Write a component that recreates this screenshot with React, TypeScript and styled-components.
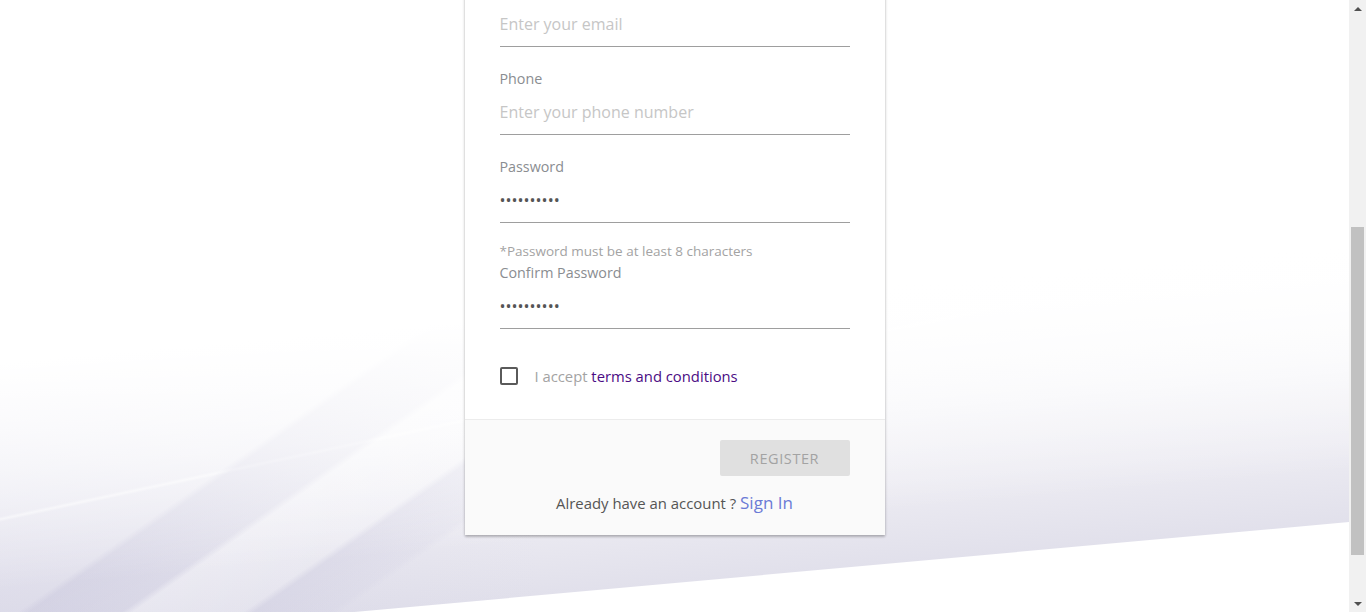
import React, { useEffect, useLayoutEffect } from 'react';
import styled, { createGlobalStyle } from 'styled-components';

const SCROLL_TOP = 391;

const GlobalStyle = createGlobalStyle`
  html, body {
    margin: 0;
    padding: 0;
  }
  body {
    font-family: 'Open Sans', 'Liberation Sans', sans-serif;
    background: #fff;
    padding-right: 17px;
  }
  * {
    box-sizing: border-box;
  }
`;

const Page = styled.div`
  position: relative;
  height: 1078px;
  display: flex;
  justify-content: center;
  align-items: flex-start;
  padding-top: 100px;

  &::before {
    content: '';
    position: absolute;
    inset: 0;
    z-index: 0;
    clip-path: polygon(0 0, 100% 0, 100% 913px, 0 1035px);
    background:
      linear-gradient(175deg, #fff 0, #fff 63%, rgba(255, 255, 255, 0.6) 72%, rgba(255, 255, 255, 0) 82%),
      linear-gradient(145deg,
        transparent 50.2%,
        rgba(190, 188, 214, 0.3) 50.6%,
        rgba(190, 188, 214, 0.18) 53.8%,
        rgba(255, 255, 255, 0.3) 54.2%,
        rgba(255, 255, 255, 0.2) 58%,
        rgba(195, 193, 218, 0.25) 58.4%,
        rgba(195, 193, 218, 0.12) 61%,
        transparent 61.4%
      ),
      linear-gradient(168deg, transparent 66.5%, rgba(255, 255, 255, 0.5) 66.7%, transparent 66.9%),
      linear-gradient(to right, rgba(200, 198, 222, 0.3), rgba(200, 198, 222, 0) 40%),
      linear-gradient(
        175deg,
        #ffffff 0,
        #ffffff 62%,
        #f6f6f9 72%,
        #ecebf2 80%,
        #e1e0eb 86.5%
      );
  }
`;

const Card = styled.div`
  position: relative;
  z-index: 1;
  width: 420px;
  background: #fff;
  box-shadow: 0 1px 3px rgba(0, 0, 0, 0.22), 0 2px 2px rgba(0, 0, 0, 0.12);
`;

const CardHeader = styled.div`
  padding: 40px 35px 0;
  height: 150px;
`;

const Title = styled.h2`
  margin: 0;
  font-size: 26px;
  font-weight: 500;
  color: #4b0c84;
`;

const Subtitle = styled.p`
  margin: 8px 0 0;
  font-size: 14px;
  color: #8a8d91;
`;

const CardBody = styled.div`
  padding: 34px 35px 33px;
  display: flex;
  flex-direction: column;
`;

const Field = styled.div`
  display: flex;
  flex-direction: column;
  margin-bottom: 22px;
`;

const Label = styled.label`
  font-size: 14.3px;
  line-height: 20px;
  color: #8a8d91;
`;

const Input = styled.input`
  width: 100%;
  height: 46px;
  padding: 0;
  border: none;
  border-bottom: 1px solid #9e9e9e;
  outline: none;
  background: transparent;
  font-family: inherit;
  font-size: 16px;
  color: #555;

  &::placeholder {
    color: #c6c6c6;
  }
`;

const Helper = styled.div`
  margin-top: 19px;
  margin-bottom: -19px;
  font-size: 13.5px;
  line-height: 18px;
  color: #a3a3a3;
`;

const CheckRow = styled.label`
  display: flex;
  align-items: center;
  gap: 17px;
  margin-top: 15px;
  font-size: 14.8px;
  line-height: 20px;
`;

const Box = styled.span`
  width: 18px;
  height: 18px;
  border: 2px solid #5a5a5a;
  border-radius: 2px;
  flex-shrink: 0;
`;

const Muted = styled.span`
  color: #a3a3a3;
`;

const Terms = styled.a`
  color: #4b0c84;
  text-decoration: none;
`;

const Footer = styled.div`
  border-top: 1px solid #ececec;
  background: #fafafa;
  padding: 20px 35px 20px;
  display: flex;
  flex-direction: column;
  align-items: stretch;
`;

const ButtonRow = styled.div`
  display: flex;
  justify-content: flex-end;
`;

const RegisterButton = styled.button`
  width: 130px;
  height: 36px;
  border: none;
  border-radius: 2px;
  background: #e0e0e0;
  color: #a3a3a3;
  font-family: inherit;
  font-size: 14.5px;
  letter-spacing: 0.6px;
  text-transform: uppercase;
  cursor: default;
`;

const SignInLine = styled.div`
  margin-top: 15px;
  text-align: center;
  font-size: 14.9px;
  line-height: 24px;
  color: #555;
`;

const SignInLink = styled.a`
  font-size: 17px;
  color: #6b7bd6;
  text-decoration: none;
`;

/* stand-in for the browser's classic scrollbar seen in the screenshot */
const ScrollTrack = styled.div`
  position: fixed;
  top: 0;
  right: 0;
  width: 17px;
  height: 100vh;
  background: #f1f1f1;
  z-index: 10;
  display: flex;
  flex-direction: column;
  align-items: center;
`;

const Arrow = styled.div<{ $down?: boolean }>`
  height: 17px;
  width: 17px;
  display: flex;
  align-items: center;
  justify-content: center;

  &::after {
    content: '';
    border-left: 4px solid transparent;
    border-right: 4px solid transparent;
    ${p => (p.$down ? 'border-top: 4px solid #505050;' : 'border-bottom: 4px solid #505050;')}
  }
`;

const TrackBody = styled.div`
  flex: 1;
  width: 100%;
  padding: 0 2px;
`;

const Thumb = styled.div`
  width: 100%;
  background: #c1c1c1;
`;

export default function App() {
  useLayoutEffect(() => {
    window.scrollTo(0, SCROLL_TOP);
  }, []);

  useEffect(() => {
    const id = requestAnimationFrame(() => window.scrollTo(0, SCROLL_TOP));
    return () => cancelAnimationFrame(id);
  }, []);

  return (
    <>
      <GlobalStyle />
      <Page>
        <Card>
          <CardHeader>
            <Title>Create Account</Title>
            <Subtitle>Sign up to get started</Subtitle>
          </CardHeader>
          <CardBody>
            <Field>
              <Label>Name</Label>
              <Input type="text" placeholder="Enter your name" />
            </Field>
            <Field>
              <Label>Email</Label>
              <Input type="email" placeholder="Enter your email" />
            </Field>
            <Field>
              <Label>Phone</Label>
              <Input type="tel" placeholder="Enter your phone number" />
            </Field>
            <Field>
              <Label>Password</Label>
              <Input type="password" defaultValue="1234567890" />
              <Helper>*Password must be at least 8 characters</Helper>
            </Field>
            <Field>
              <Label>Confirm Password</Label>
              <Input type="password" defaultValue="1234567890" />
            </Field>
            <CheckRow>
              <Box />
              <span>
                <Muted>I accept </Muted>
                <Terms href="#">terms and conditions</Terms>
              </span>
            </CheckRow>
          </CardBody>
          <Footer>
            <ButtonRow>
              <RegisterButton>Register</RegisterButton>
            </ButtonRow>
            <SignInLine>
              Already have an account ? <SignInLink href="#">Sign In</SignInLink>
            </SignInLine>
          </Footer>
        </Card>
      </Page>
      <ScrollTrack>
        <Arrow />
        <TrackBody>
          <Thumb style={{ marginTop: 210, height: 328 }} />
        </TrackBody>
        <Arrow $down />
      </ScrollTrack>
    </>
  );
}
